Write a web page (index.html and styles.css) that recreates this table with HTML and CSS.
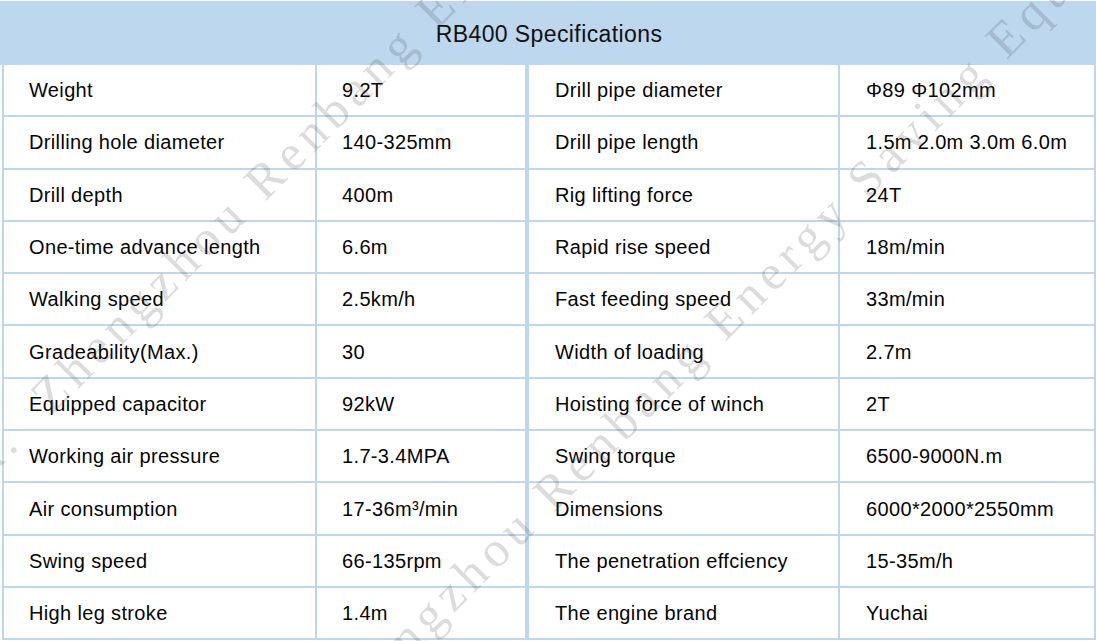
FILE: index.html
```html
<!DOCTYPE html>
<html lang="en">
<head>
<meta charset="utf-8">
<title>RB400 Specifications</title>
<link rel="stylesheet" href="styles.css">
</head>
<body>
<div class="sheet">
  <div class="title">RB400 Specifications</div>
  <div class="rows">
    <div class="row"><div class="cell">Weight</div><div class="cell split">9.2T</div><div class="cell">Drill pipe diameter</div><div class="cell">Φ89 Φ102mm</div></div>
    <div class="row"><div class="cell">Drilling hole diameter</div><div class="cell split">140-325mm</div><div class="cell">Drill pipe length</div><div class="cell">1.5m 2.0m 3.0m 6.0m</div></div>
    <div class="row"><div class="cell">Drill depth</div><div class="cell split">400m</div><div class="cell">Rig lifting force</div><div class="cell">24T</div></div>
    <div class="row"><div class="cell">One-time advance length</div><div class="cell split">6.6m</div><div class="cell">Rapid rise speed</div><div class="cell">18m/min</div></div>
    <div class="row"><div class="cell">Walking speed</div><div class="cell split">2.5km/h</div><div class="cell">Fast feeding speed</div><div class="cell">33m/min</div></div>
    <div class="row"><div class="cell">Gradeability(Max.)</div><div class="cell split">30</div><div class="cell">Width of loading</div><div class="cell">2.7m</div></div>
    <div class="row"><div class="cell">Equipped capacitor</div><div class="cell split">92kW</div><div class="cell">Hoisting force of winch</div><div class="cell">2T</div></div>
    <div class="row"><div class="cell">Working air pressure</div><div class="cell split">1.7-3.4MPA</div><div class="cell">Swing torque</div><div class="cell">6500-9000N.m</div></div>
    <div class="row"><div class="cell">Air consumption</div><div class="cell split">17-36m³/min</div><div class="cell">Dimensions</div><div class="cell">6000*2000*2550mm</div></div>
    <div class="row"><div class="cell">Swing speed</div><div class="cell split">66-135rpm</div><div class="cell">The penetration effciency</div><div class="cell">15-35m/h</div></div>
    <div class="row"><div class="cell">High leg stroke</div><div class="cell split">1.4m</div><div class="cell">The engine brand</div><div class="cell">Yuchai</div></div>
  </div>
  <div class="watermark" aria-hidden="true">
    <span class="wm wm-a">Ltd.&nbsp; Zhengzhou Renbang Energy Saving Equipment Co., Ltd.</span>
    <span class="wm wm-b">Zhengzhou Renbang Energy Saving Equipment Co., Ltd.</span>
  </div>
</div>
</body>
</html>
```

FILE: styles.css
```css
html, body {
  margin: 0;
  padding: 0;
  background: #ffffff;
}

body {
  font-family: "Liberation Sans", Arial, sans-serif;
  color: #111111;
  overflow: hidden;
}

.sheet {
  position: relative;
  width: 1096px;
  height: 641px;
  padding-top: 1px;
  box-sizing: border-box;
  overflow: hidden;
}

.title {
  height: 64px;
  background: #bdd7ee;
  display: flex;
  align-items: center;
  justify-content: center;
  font-size: 23px;
  letter-spacing: 0.4px;
  color: #111111;
  padding-top: 2px;
  padding-left: 2px;
  box-sizing: border-box;
}

.rows {
  margin-left: 2px;
  width: 1094px;
}

.row {
  display: grid;
  grid-template-columns: 313px 212px 311px 256px;
  height: 52.3px;
  box-sizing: border-box;
  border-left: 2px solid #bdd7ee;
  border-bottom: 2px solid #bdd7ee;
}

.cell {
  display: flex;
  align-items: center;
  padding-left: 25px;
  padding-top: 1px;
  border-right: 2px solid #bdd7ee;
  font-size: 20px;
  letter-spacing: 0.35px;
  white-space: nowrap;
  color: #050505;
}

.cell.split {
  border-right-width: 4px;
}

.row .cell:nth-child(3),
.row .cell:nth-child(4) {
  padding-left: 26px;
}

.watermark {
  position: absolute;
  inset: 0;
  pointer-events: none;
}

.wm {
  position: absolute;
  font-family: "Liberation Serif", "Times New Roman", serif;
  font-size: 50px;
  line-height: 50px;
  letter-spacing: 6.5px;
  white-space: nowrap;
  color: rgba(60, 60, 60, 0.18);
  transform-origin: 0 50%;
  transform: rotate(-45deg);
}

.wm-a {
  left: -64px;
  top: 482px;
}

.wm-b {
  left: 328px;
  top: 690px;
}
```
